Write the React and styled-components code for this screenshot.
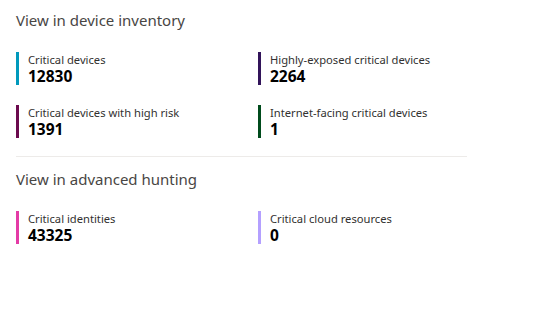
import React from "react";
import styled, { createGlobalStyle } from "styled-components";

const GlobalStyle = createGlobalStyle`
  body {
    margin: 0;
    background: #ffffff;
    font-family: "Segoe UI", "Noto Sans", "Open Sans", sans-serif;
    color: #323130;
  }
`;

const deviceMetrics = [
  { label: "Critical devices", value: "12830", color: "#0099bc" },
  { label: "Highly-exposed critical devices", value: "2264", color: "#32145a" },
  { label: "Critical devices with high risk", value: "1391", color: "#6b0a4e" },
  { label: "Internet-facing critical devices", value: "1", color: "#004b1c" },
];

const huntingMetrics = [
  { label: "Critical identities", value: "43325", color: "#e43ba6" },
  { label: "Critical cloud resources", value: "0", color: "#b4a0ff" },
];

const App = () => {
  return (
    <Wrapper>
      <GlobalStyle />
      <Section>
        <SectionTitle>View in device inventory</SectionTitle>
        <Grid>
          {deviceMetrics.map((m) => (
            <Metric key={m.label} color={m.color}>
              <Label>{m.label}</Label>
              <Value>{m.value}</Value>
            </Metric>
          ))}
        </Grid>
      </Section>
      <Divider />
      <Section>
        <SectionTitle>View in advanced hunting</SectionTitle>
        <Grid>
          {huntingMetrics.map((m) => (
            <Metric key={m.label} color={m.color}>
              <Label>{m.label}</Label>
              <Value>{m.value}</Value>
            </Metric>
          ))}
        </Grid>
      </Section>
    </Wrapper>
  );
};

export default App;

const Wrapper = styled.div`
  width: 451px;
  padding: 9px 16px;
`;

const Section = styled.div`
  display: flex;
  flex-direction: column;
`;

const SectionTitle = styled.div`
  font-size: 15px;
  line-height: 22px;
  color: #484644;
  margin-bottom: 21px;
`;

const Grid = styled.div`
  display: grid;
  grid-template-columns: 242px 209px;
  row-gap: 20px;
`;

const Metric = styled.div`
  border-left: 3px solid ${(p) => p.color};
  padding-left: 9px;
  height: 33px;
  display: flex;
  flex-direction: column;
`;

const Label = styled.div`
  font-size: 11.2px;
  line-height: 15px;
  color: #323130;
`;

const Value = styled.div`
  font-size: 15.5px;
  line-height: 18px;
  font-weight: 700;
  color: #000000;
`;

const Divider = styled.div`
  border-bottom: 1px solid #edebe9;
  margin: 18px 0 11px;
`;
